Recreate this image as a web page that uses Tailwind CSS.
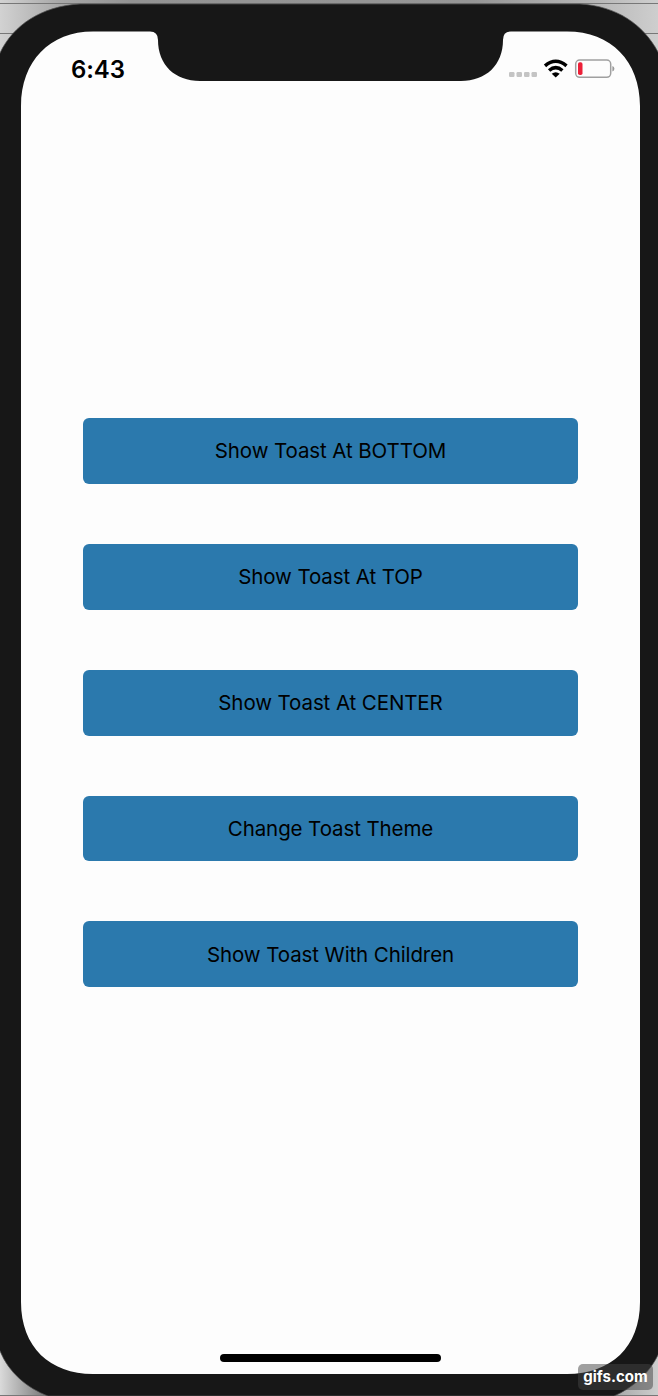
<!DOCTYPE html>
<html lang="en">
<head>
<meta charset="utf-8">
<title>Toast demo</title>
<script src="https://cdn.jsdelivr.net/npm/@tailwindcss/browser@4"></script>
</head>
<body class="h-[1396px] w-[658px] overflow-hidden">
<div class="relative flex h-[1396px] w-[658px] flex-col overflow-hidden font-['Inter',sans-serif] text-black">
  <!-- Device shell -->
  <svg class="absolute inset-0" width="658" height="1396" viewBox="0 0 658 1396">
    <defs>
      <linearGradient id="tl" x1="0" y1="0" x2="1" y2="0"><stop offset="0" stop-color="#d2d2d2"/><stop offset=".09" stop-color="#a8a8a8"/><stop offset=".2" stop-color="#939393"/><stop offset=".72" stop-color="#969696"/><stop offset=".9" stop-color="#b6b6b6"/><stop offset="1" stop-color="#cecece"/></linearGradient>
      <linearGradient id="bl" x1="0" y1="0" x2="1" y2="0"><stop offset="0" stop-color="#dadada"/><stop offset=".07" stop-color="#777"/><stop offset=".85" stop-color="#777"/><stop offset="1" stop-color="#cecece"/></linearGradient>
    </defs>
    <rect width="658" height="700" fill="url(#tl)"/>
    <rect y="700" width="658" height="696" fill="url(#bl)"/>
    <path d="M0 3.500H658M0 33.500H658M0 1395.500H658" stroke="#777" stroke-width="1"/>
    <path d="M80 4H580C616 6 643 24 658 52L664 66V1340L658 1355C650 1372 633 1388 614 1396H48C27 1388 9 1373 0 1351L-6 1336V68L0 53C13 25 42 6 80 4Z" fill="#171717" stroke="#555" stroke-width=".7"/>
    <path d="M93 31.500H150Q158 31.500 158 40C158 65 175 81 200 81H461C486 81 503 65 503 40Q503 31.500 511 31.500H567C611 31.500 640 61 640 106V1302C640 1347 611 1374 567 1374H93C50 1374 21 1347 21 1302V106C21 61 50 31.500 93 31.500Z" fill="#fdfdfd"/>
  </svg>

  <header class="relative flex h-[108px] shrink-0 items-start justify-between pt-[54px] pr-[43px] pl-[71px]">
    <time class="pt-px text-[24px] leading-[30px] font-semibold tracking-[-0.1px]">6:43</time>
    <svg class="mt-[2px]" width="108" height="26" viewBox="0 0 108 26">
      <g fill="#c4c4c4"><rect x="2" y="16" width="5.500" height="5" rx="1.200"/><rect x="9.500" y="16" width="5.500" height="5" rx="1.200"/><rect x="17" y="16" width="5.500" height="5" rx="1.200"/><rect x="24.500" y="16" width="5.500" height="5" rx="1.200"/></g>
      <g fill="none" stroke="#000" stroke-width="3.500"><path d="M38 9.800Q48.700 .800 59.500 9.800"/><path d="M42.100 14.500Q48.700 8.800 55.400 14.500"/></g>
      <path d="M44.700 17.800Q48.700 14.600 52.700 17.800L48.700 21.500Z"/>
      <rect x="68.700" y="4" width="35" height="17.300" rx="4" fill="none" stroke="#a0a0a0" stroke-width="1.500"/>
      <rect x="71" y="6.300" width="4.500" height="12.700" rx="1.800" fill="#ec2038"/>
      <path d="M105.400 10V15.500Q107.400 14.700 107.400 12.700T105.400 10Z" fill="#999"/>
    </svg>
  </header>

  <main class="relative mt-[310.3px] flex flex-col gap-[60px] pr-[80px] pl-[83px] text-[20.5px] tracking-[-0.1px]">
    <button class="h-[65.8px] rounded-[6px] bg-[#2b79ad] pt-px">Show Toast At BOTTOM</button>
    <button class="h-[65.8px] rounded-[6px] bg-[#2b79ad] pt-px">Show Toast At TOP</button>
    <button class="h-[65.8px] rounded-[6px] bg-[#2b79ad] pt-px">Show Toast At CENTER</button>
    <button class="h-[65.8px] rounded-[6px] bg-[#2b79ad] pt-px">Change Toast Theme</button>
    <button class="h-[65.8px] rounded-[6px] bg-[#2b79ad] pt-px">Show Toast With Children</button>
  </main>

  <div class="absolute top-[1354px] left-[220px] h-[8px] w-[221px] rounded-full bg-black"></div>
  <div class="absolute top-[1364px] left-[578px] flex h-[26px] w-[75px] items-center justify-center rounded-[5px] bg-[#444]/50 text-[15px] font-bold text-white">gifs.com</div>
</div>
</body>
</html>
